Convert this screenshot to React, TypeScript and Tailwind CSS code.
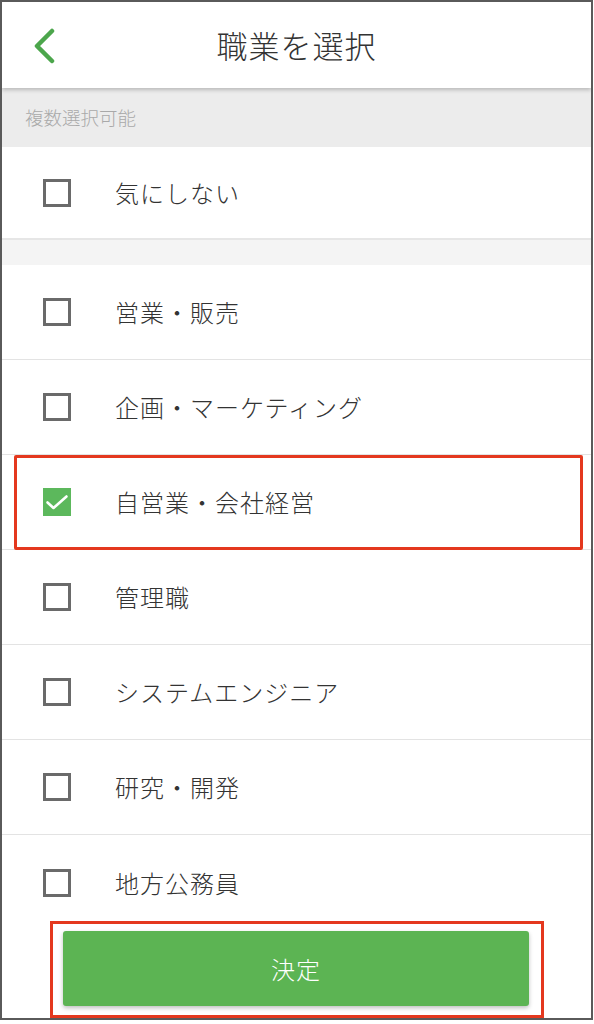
import React from "react";

const items = [
  "営業・販売",
  "企画・マーケティング",
  "自営業・会社経営",
  "管理職",
  "システムエンジニア",
  "研究・開発",
  "地方公務員",
];

function Box({ checked }: { checked?: boolean }) {
  if (checked) {
    return (
      <div className="w-[28px] h-[28px] bg-[#5cb85c] shrink-0">
        <svg width="28" height="28" viewBox="0 0 28 28" fill="none">
          <path d="M4.5 14.5 L10.5 20 L23.5 8.5" stroke="white" strokeWidth="2.6" strokeLinecap="round" strokeLinejoin="round" />
        </svg>
      </div>
    );
  }
  return <div className="w-[28px] h-[28px] border-[3px] border-[#6a6a6a] shrink-0" />;
}

function Row({ label, checked, highlight, last }: { label: string; checked?: boolean; highlight?: boolean; last?: boolean }) {
  return (
    <div className={`relative h-[95px] shrink-0 flex items-center pl-[41px] bg-white ${last ? "" : "border-b border-[#e3e3e3]"}`}>
      <Box checked={checked} />
      <span className="ml-[44px] text-[24px] font-light text-[#333] tracking-[1px]">{label}</span>
      {highlight && (
        <div className="absolute left-[12px] right-[8px] top-0 bottom-[-1px] border-[3px] border-[#e4381e] rounded-[2px]" />
      )}
    </div>
  );
}

export default function App() {
  return (
    <div
      className="w-[594px] h-[1024px] bg-white"
      style={{ fontFamily: '"Noto Sans CJK JP", "Noto Sans", sans-serif' }}
    >
      <div className="w-[593px] h-[1020px] border-2 border-[#5a5a5a] flex flex-col overflow-hidden bg-white">
        <div className="relative z-10 h-[86px] shrink-0 flex items-center justify-center bg-white shadow-[0_2px_4px_rgba(0,0,0,0.22)]">
          <svg className="absolute left-[30px] top-[26px]" width="26" height="36" viewBox="0 0 26 36" fill="none">
            <path d="M20 3 L5 18 L20 33" stroke="#4ca64c" strokeWidth="4.5" strokeLinecap="round" strokeLinejoin="round" />
          </svg>
          <span className="text-[31px] font-light text-[#333] tracking-[1px]">職業を選択</span>
        </div>
        <div className="h-[59px] shrink-0 bg-[#ececec] flex items-center pl-[23px]">
          <span className="text-[18.5px] font-light text-[#a9a9a9]">複数選択可能</span>
        </div>
        <div className="flex-1 overflow-hidden flex flex-col">
          <div className="h-[93px] shrink-0 flex items-center pl-[41px] bg-white border-b-2 border-[#e6e6e6]">
            <Box />
            <span className="ml-[44px] text-[24px] font-light text-[#333] tracking-[1px]">気にしない</span>
          </div>
          <div className="h-[25px] shrink-0 bg-[#f4f4f4]" />
          {items.map((it, i) => (
            <Row key={it} label={it} checked={i === 2} highlight={i === 2} last={i === items.length - 1} />
          ))}
        </div>
        <div className="shrink-0 bg-white pt-[6px] pb-[0px] pl-[48px]">
          <div className="w-[494px] h-[97px] border-[3px] border-[#e4381e] pt-[7px] pl-[10px]">
            <button className="w-[466px] h-[75px] bg-[#5cb453] rounded-[3px] shadow-[0_2px_4px_rgba(0,0,0,0.25)] flex items-center justify-center">
              <span className="text-[24px] font-light text-white tracking-[1px]">決定</span>
            </button>
          </div>
        </div>
      </div>
    </div>
  );
}
